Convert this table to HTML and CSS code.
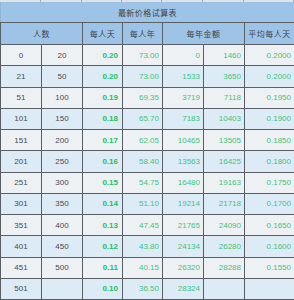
FILE: index.html
```html
<!DOCTYPE html>
<html lang="zh">
<head>
<meta charset="utf-8">
<title>最新价格试算表</title>
<link rel="stylesheet" href="styles.css">
</head>
<body>
<div class="sheet">
  <div class="strip">
    <span></span><span></span><span></span><span></span><span></span><span></span><span></span>
  </div>
  <table class="calc">
    <colgroup>
      <col class="c41"><col class="c41"><col class="c40"><col class="c40"><col class="c41"><col class="c41"><col class="c49">
    </colgroup>
    <thead>
      <tr class="title"><th colspan="7">最新价格试算表</th></tr>
      <tr class="head">
        <th colspan="2">人数</th>
        <th>每人天</th>
        <th>每人年</th>
        <th colspan="2">每年金额</th>
        <th>平均每人天</th>
      </tr>
    </thead>
    <tbody>
      <tr><td class="n">0</td><td class="n">20</td><td class="d">0.20</td><td class="v">73.00</td><td class="v">0</td><td class="v">1460</td><td class="v">0.2000</td></tr>
      <tr><td class="n">21</td><td class="n">50</td><td class="d">0.20</td><td class="v">73.00</td><td class="v">1533</td><td class="v">3650</td><td class="v">0.2000</td></tr>
      <tr><td class="n">51</td><td class="n">100</td><td class="d">0.19</td><td class="v">69.35</td><td class="v">3719</td><td class="v">7118</td><td class="v">0.1950</td></tr>
      <tr><td class="n">101</td><td class="n">150</td><td class="d">0.18</td><td class="v">65.70</td><td class="v">7183</td><td class="v">10403</td><td class="v">0.1900</td></tr>
      <tr><td class="n">151</td><td class="n">200</td><td class="d">0.17</td><td class="v">62.05</td><td class="v">10465</td><td class="v">13505</td><td class="v">0.1850</td></tr>
      <tr><td class="n">201</td><td class="n">250</td><td class="d">0.16</td><td class="v">58.40</td><td class="v">13563</td><td class="v">16425</td><td class="v">0.1800</td></tr>
      <tr><td class="n">251</td><td class="n">300</td><td class="d">0.15</td><td class="v">54.75</td><td class="v">16480</td><td class="v">19163</td><td class="v">0.1750</td></tr>
      <tr><td class="n">301</td><td class="n">350</td><td class="d">0.14</td><td class="v">51.10</td><td class="v">19214</td><td class="v">21718</td><td class="v">0.1700</td></tr>
      <tr><td class="n">351</td><td class="n">400</td><td class="d">0.13</td><td class="v">47.45</td><td class="v">21765</td><td class="v">24090</td><td class="v">0.1650</td></tr>
      <tr><td class="n">401</td><td class="n">450</td><td class="d">0.12</td><td class="v">43.80</td><td class="v">24134</td><td class="v">26280</td><td class="v">0.1600</td></tr>
      <tr><td class="n">451</td><td class="n">500</td><td class="d">0.11</td><td class="v">40.15</td><td class="v">26320</td><td class="v">28288</td><td class="v">0.1550</td></tr>
      <tr><td class="n">501</td><td class="n"></td><td class="d">0.10</td><td class="v">36.50</td><td class="v">28324</td><td class="v"></td><td class="v"></td></tr>
    </tbody>
  </table>
</div>
</body>
</html>
```

FILE: styles.css
```css
html, body {
  margin: 0;
  padding: 0;
  background: #ffffff;
}

.sheet {
  width: 294px;
  height: 300px;
  overflow: hidden;
  background: #eef1f4;
}

.strip {
  display: grid;
  grid-template-columns: 41px 41px 40px 40px 41px 41px 50px;
  height: 2px;
  background: #dfe3e8;
}

.strip span {
  border-right: 1px solid #a8adb3;
}

.calc {
  table-layout: fixed;
  border-collapse: collapse;
  width: 294px;
  font-family: "Liberation Sans", Arial, "Noto Sans CJK SC", sans-serif;
  font-size: 8px;
}

.c41 { width: 41px; }
.c40 { width: 40px; }
.c49 { width: 50px; }

.calc th,
.calc td {
  border: 1px solid #5a5f66;
  padding: 0;
  white-space: nowrap;
  overflow: hidden;
}

.title th {
  height: 20px;
  background: #9dc3e6;
  color: #3e4349;
  font-family: "Noto Sans CJK SC", sans-serif;
  font-weight: normal;
  font-size: 8px;
  letter-spacing: 0.45px;
  border-top: none;
  border-left: 1px solid #8fb4d6;
}

.head th {
  height: 21px;
  background: #9dc3e6;
  color: #3e4349;
  font-family: "Noto Sans CJK SC", sans-serif;
  font-weight: normal;
  font-size: 8px;
  letter-spacing: 0.5px;
}

.calc tbody tr {
  height: 21.25px;
}

.calc tbody tr:nth-child(even) td {
  background: #ddebf7;
}

.calc td.n {
  text-align: center;
  color: #454a50;
}

.calc td.d {
  text-align: right;
  padding-right: 4px;
  color: #22c160;
  font-weight: bold;
}

.calc td.v {
  text-align: right;
  padding-right: 3px;
  color: #3ec47c;
}

.calc td:last-child,
.calc th:last-child {
  border-right: 1px solid #8a9099;
}
```
